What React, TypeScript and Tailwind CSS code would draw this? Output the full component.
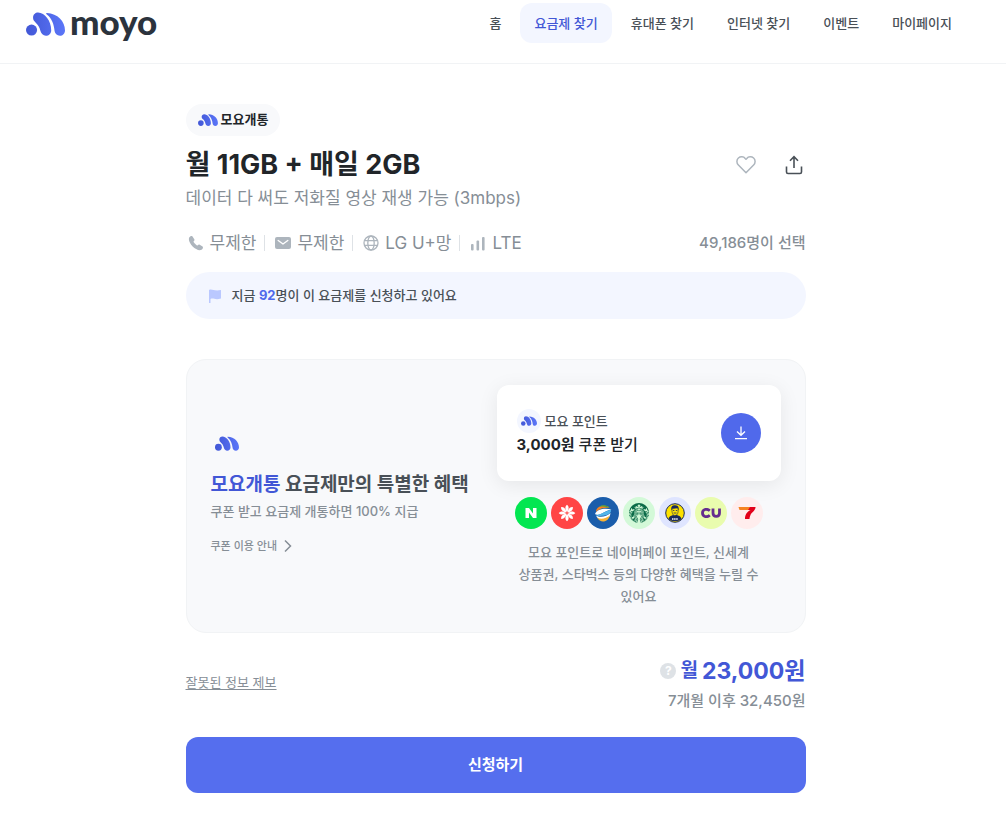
import type { ReactNode } from 'react';
import { SiStarbucks } from 'react-icons/si';

const navItems = [
  { label: '홈' },
  { label: '요금제 찾기', active: true },
  { label: '휴대폰 찾기' },
  { label: '인터넷 찾기' },
  { label: '이벤트' },
  { label: '마이페이지' },
];

function MoyoMark({ className, id }: { className: string; id: string }) {
  return (
    <svg viewBox="78 36 116 70" className={className} fill={`url(#${id})`} aria-hidden="true">
      <defs>
        <linearGradient id={id} x1="78" y1="0" x2="194" y2="0" gradientUnits="userSpaceOnUse">
          <stop stopColor="#4257d6" />
          <stop offset="1" stopColor="#5b76f8" />
        </linearGradient>
      </defs>
      <circle cx="94.500" cy="89" r="16.500" />
      <path d="M99 52C99 43 106 37 114 37C134 37 153 62 153 90C153 99 146 106 137 106C129 106 123 100 121 92C118 79 114 74 107 67C101 62 99 58 99 52Z" />
      <path d="M140 38C172 40 194 62 194 90C194 99 187 106 179 106C170 106 164 100 163 92C161 72 155 55 140 43C137 40 138 38 140 38Z" />
    </svg>
  );
}

function PhoneIcon() {
  return (
    <svg viewBox="0 0 16 16" className="w-4 h-4" fill="#adb5bd" aria-hidden="true">
      <path d="M1.200 2.600C2 1.300 3.600.6 4.500 1.500L6.300 4.300C6.700 5 6.400 5.700 5.500 6.400C5.300 7.200 8.600 10.600 9.500 10.500C10.300 9.600 11 9.300 11.700 9.700L14.600 11.600C15.500 12.400 14.600 14.100 13.400 14.800C8.500 17 -1 7.500 1.200 2.600Z" />
    </svg>
  );
}

function MailIcon() {
  return (
    <svg viewBox="0 0 16 16" className="w-4 h-4" aria-hidden="true">
      <rect x="0" y="2" width="16" height="12" rx="2" fill="#adb5bd" />
      <path d="M3.200 5.500L8 9L12.800 5.500" fill="none" stroke="#fff" strokeWidth="1.400" strokeLinecap="round" strokeLinejoin="round" />
    </svg>
  );
}

function GlobeIcon() {
  return (
    <svg viewBox="0 0 16 16" className="w-4 h-4" fill="none" stroke="#adb5bd" strokeWidth="1.300" aria-hidden="true">
      <circle cx="8" cy="8" r="7" />
      <ellipse cx="8" cy="8" rx="3.200" ry="7" />
      <path d="M1.500 5.700H14.500M1.500 10.300H14.500" />
    </svg>
  );
}

function SignalIcon() {
  return (
    <svg viewBox="0 0 16 16" className="w-4 h-4" fill="#adb5bd" aria-hidden="true">
      <rect x="1" y="9" width="2.600" height="6.500" rx="1" />
      <rect x="6.500" y="5.500" width="2.600" height="10" rx="1" />
      <rect x="12" y="2" width="2.600" height="13.500" rx="1" />
    </svg>
  );
}

const specs = [
  { icon: <PhoneIcon />, label: '무제한' },
  { icon: <MailIcon />, label: '무제한' },
  { icon: <GlobeIcon />, label: 'LG U+망' },
  { icon: <SignalIcon />, label: 'LTE' },
];

function Partner({ className, children }: { className: string; children: ReactNode }) {
  return (
    <li className={`w-8 h-8 rounded-full flex items-center justify-center ${className}`}>{children}</li>
  );
}

function Partners() {
  return (
    <ul className="flex justify-center gap-1 mt-4">
      <Partner className="bg-[#03e651]">
        <svg viewBox="0 0 12 12" className="w-3 h-3" fill="#fff" role="img" aria-label="네이버페이">
          <path d="M.5 1H4L8 6.600V1H11.500V11H8L4 5.400V11H.5Z" />
        </svg>
      </Partner>
      <Partner className="bg-[#ff4545]">
        <svg viewBox="-9 -9 18 18" className="w-[18px] h-[18px]" fill="#fff" role="img" aria-label="신세계">
          {[0, 45, 90, 135, 180, 225, 270, 315].map(angle => (
            <path key={angle} d="M0 -.8C-2 -3.500 -2.300 -6.500 0 -8.300C2.300 -6.500 2 -3.500 0 -.8Z" transform={`rotate(${angle})`} />
          ))}
        </svg>
      </Partner>
      <Partner className="bg-[#1a5dab]">
        <svg viewBox="0 0 18 18" className="w-[18px] h-[18px]" role="img" aria-label="온누리상품권">
          <path d="M2 7C3 1.500 12 -.5 15.500 4C11 3 6 4 2 8Z" fill="#f58220" />
          <path d="M5 2.500C9 .5 13 1 15.500 4C12 2.500 8 2.300 5 2.500Z" fill="#3fa843" />
          <path d="M1 10C3 5 11 3.500 17.500 5.500C13 6 11 8 8 9.500C5 11 3 11.500 1 10Z" fill="#fff" />
          <path d="M2 10.500C7 11.500 11 6.500 17 6C17.500 10 12 11.500 8 11.800C5 12.300 3 12 2 10.500Z" fill="#52b5e9" />
          <path d="M2 11.500C6 14 13 12.500 16.500 9C16 14 12.500 16 9 16C6 16 3 14.500 2 11.500Z" fill="#fff" />
          <path d="M3 13.500C7 16 12 14.500 16 11.500C14.500 16 11.500 17.500 9 17.500C7 17.500 4.500 16 3 13.500Z" fill="#f9b233" />
        </svg>
      </Partner>
      <Partner className="bg-[#d3f9d8]">
        <SiStarbucks className="w-5 h-5 text-[#0b6b48]" role="img" aria-label="스타벅스" />
      </Partner>
      <Partner className="bg-[#dfe5ff]">
        <svg viewBox="0 0 20 20" className="w-5 h-5" role="img" aria-label="메가커피">
          <circle cx="10" cy="10" r="9.300" fill="#fde100" stroke="#1b2a5c" strokeWidth="1" />
          <path d="M3.500 16C4 13 7 12.500 8 12H12C13 12.500 16 13 16.500 16C14 19 6 19 3.500 16Z" fill="#1b2a5c" />
          <path d="M6.500 7C5.500 3 8 2 10.500 2.300C13.500 2.500 14 4.500 13.500 7Z" fill="#1b2a5c" />
          <path d="M7 5.800C9 5.800 10.500 4.800 13 5.200C13.500 9 12.800 12.500 10 12.500C7.500 12.500 6.800 9.500 7 5.800Z" fill="#fde100" stroke="#1b2a5c" strokeWidth=".6" />
          <path d="M8 7.500H9.400M10.800 7.500H12.200M8.600 10H11.500" stroke="#1b2a5c" strokeWidth=".8" />
          <path d="M7 16H13" stroke="#fff" strokeWidth="1.300" strokeDasharray="1.500 .6" />
        </svg>
      </Partner>
      <Partner className="bg-[#e9fcae]">
        <svg viewBox="0 0 20 10" className="w-5 h-[10px]" fill="none" stroke="#652d8e" strokeWidth="2.800" role="img" aria-label="CU">
          <path d="M8.800 2.800C5.500 0 1.500 1.500 1.500 5C1.500 8.500 5.500 10 8.800 7.200" />
          <path d="M12 .5V5C12 9.500 18.500 9.500 18.500 5V.5" />
        </svg>
      </Partner>
      <Partner className="bg-[#ffeded]">
        <svg viewBox="0 0 18 14" className="w-[18px] h-[14px]" role="img" aria-label="세븐일레븐">
          <path d="M.5 1H17.500L15 4H1.500Z" fill="#f58220" />
          <path d="M12 1H17.500C17.500 5 13.500 6 12.500 9C12 10.500 11.500 11.500 11.500 13H7C7 9 8.500 6 12.500 4H10Z" fill="#e2001a" />
        </svg>
      </Partner>
    </ul>
  );
}

function Header() {
  return (
    <header className="flex items-start justify-between h-16 pl-[26px] pr-10 border-b border-[#f1f3f5]">
      <a href="#" className="flex items-center gap-[5px] h-12 text-[#2b333d]">
        <MoyoMark id="mark-header" className="w-[39px] h-6" />
        <span className="pb-1.5 font-['Lato',sans-serif] font-black text-[35px] leading-10">moyo</span>
      </a>
      <nav className="flex gap-[5px] pt-[3px]">
        {navItems.map(item => (
          <a
            key={item.label}
            href="#"
            className={`px-3.5 rounded-xl text-[13px] leading-10 font-medium whitespace-nowrap ${
              item.active ? 'bg-[#f3f6ff] text-[#4257d6]' : 'text-[#495057]'
            }`}
          >
            {item.label}
          </a>
        ))}
      </nav>
    </header>
  );
}

function BenefitCard() {
  return (
    <section className="flex items-center justify-between mt-10 px-6 pt-[25px] pb-[25px] rounded-[20px] border border-[#f1f3f5] bg-[#f8f9fb]">
      <div>
        <MoyoMark id="mark-benefit" className="w-6 h-[15px] ml-1 mb-[21px]" />
        <h2 className="text-[19px] leading-[26px] font-bold text-[#495057]">
          <span className="text-[#4257d6]">모요개통</span> 요금제만의 특별한 혜택
        </h2>
        <p className="mt-[3px] text-[13px] leading-5 font-medium text-[#868e96]">쿠폰 받고 요금제 개통하면 100% 지급</p>
        <a href="#" className="flex items-center gap-1 mt-[15px] text-[11px] leading-5 font-medium text-[#868e96]">
          쿠폰 이용 안내
          <svg viewBox="0 0 14 14" className="w-3.5 h-3.5" fill="none" stroke="#868e96" strokeWidth="1.500" aria-hidden="true">
            <path d="M4 1.500L9.500 7L4 12.500" />
          </svg>
        </a>
      </div>

      <div className="w-[284px]">
        {/* Coupon */}
        <div className="flex items-center justify-between h-24 px-5 rounded-xl bg-white shadow-[0_4px_20px_rgba(0,0,0,0.08)]">
          <div>
            <p className="flex items-center gap-1 text-[13px] leading-6 font-medium text-[#495057]">
              <span className="w-6 h-6 rounded-full bg-[#f3f6ff] flex items-center justify-center">
                <MoyoMark id="mark-point" className="w-4 h-[10px]" />
              </span>
              모요 포인트
            </p>
            <p className="text-[15px] leading-6 font-medium text-[#212529]">
              <strong className="font-bold">3,000원</strong> 쿠폰 받기
            </p>
          </div>
          <button className="w-10 h-10 rounded-full bg-[#5069eb] flex items-center justify-center" aria-label="쿠폰 받기">
            <svg viewBox="0 0 14 14" className="w-3.5 h-3.5" fill="none" stroke="#fff" strokeWidth="1.300" aria-hidden="true">
              <path d="M7 .5V9M3 5.500L7 9.300L11 5.500M1 12.700H13" />
            </svg>
          </button>
        </div>
        <Partners />
        <p className="mt-3 px-5 text-[13px] leading-[22px] font-medium text-center text-[#868e96] break-keep">
          모요 포인트로 네이버페이 포인트, 신세계 상품권, 스타벅스 등의 다양한 혜택을 누릴 수 있어요
        </p>
      </div>
    </section>
  );
}

export default function App() {
  return (
    <div className="min-h-screen bg-white font-[Inter,'Noto_Sans_CJK_KR',sans-serif]">
      <Header />

      <div className="pr-[15px]">
        <main className="max-w-[620px] mx-auto pt-10 pb-6">
          <span className="inline-flex items-center gap-[3px] h-8 px-3 rounded-full bg-[#f8f9fb] text-[13px] font-bold text-[#212529] align-top">
            <MoyoMark id="mark-badge" className="w-5 h-3" />
            모요개통
          </span>

          {/* Title */}
          <div className="flex items-center justify-between mt-2">
            <h1 className="text-[27px] leading-[41px] font-bold text-[#212529]">월 11GB + 매일 2GB</h1>
            <div className="flex gap-6">
              <button className="w-6 h-6 flex items-center justify-center" aria-label="찜하기">
                <svg viewBox="0 0 20 18" className="w-5 h-[18px]" fill="none" stroke="#adb5bd" strokeWidth="1.500" strokeLinejoin="round" aria-hidden="true">
                  <path d="M10 16.800L2.400 9C.4 6.900.4 3.800 2.400 2C4.400.3 7.600.5 9.200 2.400L10 3.300L10.800 2.400C12.400.5 15.600.3 17.600 2C19.600 3.800 19.600 6.900 17.600 9Z" />
                </svg>
              </button>
              <button className="w-6 h-6 flex items-center justify-center" aria-label="공유하기">
                <svg viewBox="0 0 18 20" className="w-[18px] h-5" fill="none" stroke="#495057" strokeWidth="1.600" aria-hidden="true">
                  <path d="M1.500 11.500V17Q1.500 18.500 3 18.500H15Q16.500 18.500 16.500 17V11.500M9 13V2M5 5.700L9 1.700L13 5.700" />
                </svg>
              </button>
            </div>
          </div>
          <p className="text-[17px] leading-[27px] text-[#868e96]">데이터 다 써도 저화질 영상 재생 가능 (3mbps)</p>

          {/* Specs */}
          <div className="flex items-center justify-between mt-[17px]">
            <ul className="flex items-center">
              {specs.map((spec, i) => (
                <li key={i} className="flex items-center text-[17px] leading-[28px] text-[#868e96]">
                  {i > 0 && <span className="w-px h-4 mx-2 bg-[#dee2e6]" />}
                  <span className="flex items-center gap-1.5 pl-0.5">
                    {spec.icon}
                    {spec.label}
                  </span>
                </li>
              ))}
            </ul>
            <p className="text-[15px] font-medium text-[#868e96]">49,186명이 선택</p>
          </div>

          <div className="flex items-center gap-2 h-[47px] mt-[15px] px-5 rounded-full bg-[#f3f6ff] text-[13px] font-medium text-[#495057]">
            <svg viewBox="0 0 18 18" className="w-[18px] h-[18px]" fill="#bac8ff" aria-hidden="true">
              <path d="M3 3C6 1.500 8 4.500 15 3V11.500C9 13.500 7.500 10.500 4.500 12V16H3Z" />
            </svg>
            <p>
              지금 <strong className="font-bold text-[#5069eb]">92</strong>명이 이 요금제를 신청하고 있어요
            </p>
          </div>

          <BenefitCard />

          {/* Price */}
          <div className="flex items-center justify-between mt-5">
            <a href="#" className="text-[13px] text-[#868e96] underline underline-offset-2">잘못된 정보 제보</a>
            <div className="text-right">
              <p className="flex items-center justify-end gap-1 leading-9 font-bold text-[#4257d6]">
                <button className="w-4 h-4 rounded-full bg-[#dee2e6] text-white text-xs leading-4" aria-label="요금 안내">?</button>
                <span className="text-[19px]">월</span>
                <span className="text-[23px]">23,000원</span>
              </p>
              <p className="text-[15px] leading-6 font-medium text-[#868e96]">7개월 이후 32,450원</p>
            </div>
          </div>

          <button className="w-full h-14 mt-6 rounded-xl bg-[#556eee] text-[15px] font-bold text-white">신청하기</button>
        </main>
      </div>
    </div>
  );
}
